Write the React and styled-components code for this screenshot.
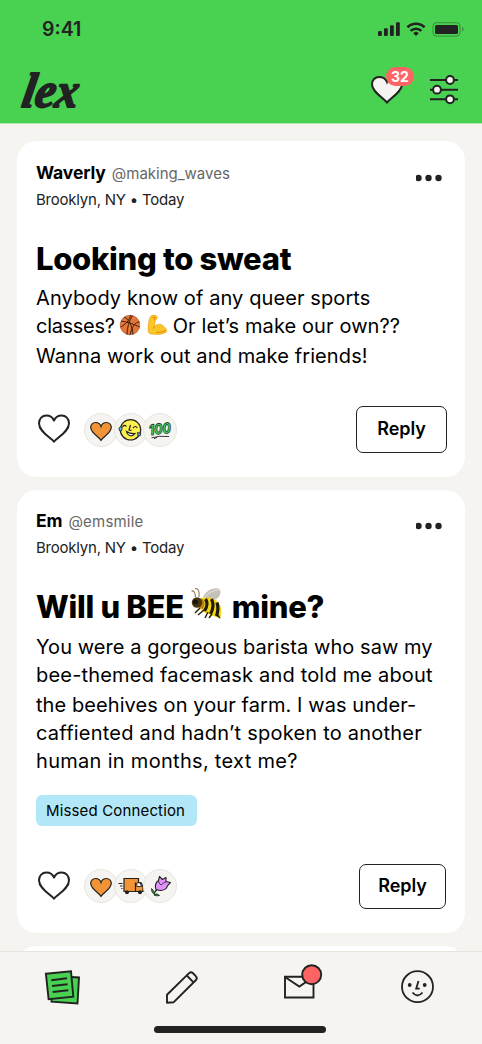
import styled, { createGlobalStyle } from "styled-components";

const GlobalStyle = createGlobalStyle`
  * {
    box-sizing: border-box;
  }
  body {
    margin: 0;
    background: #f5f4f0;
    font-family: Inter, "Liberation Sans", sans-serif;
    color: #000;
  }
  svg {
    display: block;
    flex-shrink: 0;
  }
`;

const Screen = styled.div`
  width: 482px;
  height: 1044px;
  display: flex;
  flex-direction: column;
  overflow: hidden;
  background: #f5f4f0;
`;

const Header = styled.header`
  height: 124px;
  flex-shrink: 0;
  background: #49d152;
  border-bottom: 1px solid #b4e6b1;
`;

const StatusBar = styled.div`
  display: flex;
  justify-content: space-between;
  height: 60px;
  padding: 18px 16px 0 42px;
`;

const Clock = styled.div`
  font-size: 19.5px;
  line-height: 23px;
  font-weight: 600;
  color: #222;
`;

const TopBar = styled.div`
  display: flex;
  justify-content: space-between;
  padding-left: 10px;
  padding-right: 22px;
`;

const TopActions = styled.div`
  display: flex;
  gap: 22px;
  padding-top: 4px;
`;

const Likes = styled.div`
  position: relative;
`;

const Count = styled.span`
  position: absolute;
  left: 16px;
  top: 3px;
  width: 28px;
  height: 19px;
  border-radius: 10px;
  background: #ff6464;
  color: #fff;
  font-size: 14px;
  font-weight: 700;
  line-height: 19px;
  text-align: center;
`;

const Feed = styled.main`
  flex: 1;
  min-height: 0;
  overflow: hidden;
  display: flex;
  flex-direction: column;
  gap: 13px;
  padding: 17px 16.6px 0 16.5px;
`;

const Card = styled.article`
  flex-shrink: 0;
  height: ${(p) => p.$height}px;
  padding: ${(p) => p.$top || 19}px 19.4px 0 19.5px;
  border-radius: 20px;
  background: #fff;
  display: flex;
  flex-direction: column;
`;

const CardTop = styled.div`
  display: flex;
  justify-content: space-between;
  height: 79px;
`;

const Author = styled.div`
  display: flex;
  align-items: baseline;
  gap: 6px;
  height: 27px;
  line-height: 26px;
`;

const Name = styled.span`
  font-size: 17.5px;
  font-weight: 700;
  letter-spacing: -0.1px;
`;

const Handle = styled.span`
  font-size: 15px;
  color: #666;
  letter-spacing: ${(p) => p.$track}px;
`;

const Place = styled.div`
  font-size: 15px;
  line-height: 25px;
  color: #222;
  letter-spacing: -0.22px;
`;

const Title = styled.h2`
  margin: 0;
  display: flex;
  height: ${(p) => p.$height}px;
  font-size: 31px;
  line-height: 39px;
  font-weight: 800;
  letter-spacing: -0.3px;
  white-space: pre;
`;

const Body = styled.div`
  font-size: 20px;
`;

const Line = styled.div`
  display: flex;
  height: 28px;
  line-height: 28px;
  white-space: pre;
  letter-spacing: ${(p) => p.$track || 0}px;

  &:nth-child(3) {
    margin-top: 1.5px;
  }
`;

const Tight = styled.span`
  letter-spacing: -0.3px;
`;

const Emoji = styled.span`
  margin-left: ${(p) => p.$left || 0}px;
  margin-right: ${(p) => p.$right || 0}px;
`;

const Tag = styled.div`
  align-self: flex-start;
  width: 161px;
  height: 31px;
  margin-top: 20.5px;
  padding-left: 10px;
  border-radius: 6px;
  background: #b1e7f6;
  font-size: 15px;
  line-height: 32px;
  white-space: nowrap;
  letter-spacing: 0.15px;
`;

const CardBottom = styled.div`
  display: flex;
  align-items: center;
  height: 48px;
  margin-top: auto;
  margin-bottom: ${(p) => p.$bottom}px;
  padding-left: 1px;
`;

const Reactions = styled.div`
  display: flex;
  margin-left: 13px;
  margin-top: ${(p) => p.$drop || 0}px;
`;

const Bubble = styled.div`
  width: 34px;
  height: 34px;
  margin-right: -4.3px;
  border: 1px solid #e7e5df;
  border-radius: 50%;
  background: #f5f4f0;
`;

const ReplyButton = styled.button`
  width: ${(p) => p.$width}px;
  height: ${(p) => p.$height}px;
  margin-left: auto;
  margin-right: ${(p) => p.$inset}px;
  padding: 0 0 2px;
  border: 1.5px solid #222;
  border-radius: 7px;
  background: #fff;
  font-family: inherit;
  font-size: 18px;
  font-weight: 600;
  color: #000;
  letter-spacing: -0.1px;
`;

const TabBar = styled.nav`
  height: 93px;
  flex-shrink: 0;
  border-top: 1px solid #e5e3de;
  background: #f5f4f0;
`;

const Tabs = styled.div`
  display: grid;
  grid-template-columns: 121px 119px 117.5px 36px;
  align-items: center;
  height: 74px;
  padding: 0 0 4px 42px;
`;

const HomeIndicator = styled.div`
  width: 172px;
  height: 7px;
  margin-left: 154px;
  border-radius: 4px;
  background: #222;
`;

const StatusIcons = () => (
  <svg width="90" height="20" viewBox="376 18 90 20">
    <g fill="#222">
      <rect x="378" y="31" width="3.8" height="5" rx="1" />
      <rect x="384" y="28.3" width="3.8" height="7.7" rx="1" />
      <rect x="390" y="25.3" width="3.8" height="10.7" rx="1" />
      <rect x="396" y="22.3" width="3.8" height="13.7" rx="1" />
      <path d="M413.2 33.2a4 4 0 0 1 5.6 0L416 36z" />
      <rect x="435" y="25" width="23" height="9" rx="1.6" />
      <path d="M462.3 27v4.6q1.2-.6 1.2-2.3t-1.2-2.3z" opacity=".5" />
    </g>
    <g fill="none" stroke="#222" strokeWidth="2.6">
      <path d="M407.4 27.2a12.3 12.3 0 0 1 17.2 0" />
      <path d="M410.6 30.9a7.8 7.8 0 0 1 10.8 0" />
    </g>
    <rect x="433" y="22.7" width="27" height="13.4" rx="3.4" fill="none" stroke="#222" strokeOpacity=".4" />
  </svg>
);

const Logo = () => (
  <svg width="84" height="62" viewBox="10 60 84 62">
    <text
      x="0"
      y="0"
      transform="translate(20.500 106.500) skewX(-10)"
      fill="#222"
      stroke="#222"
      strokeWidth="1.8"
      strokeLinejoin="round"
      fontFamily="'Liberation Serif', serif"
      fontSize="49"
      fontStyle="italic"
      fontWeight="700"
      textLength="56"
      lengthAdjust="spacingAndGlyphs"
    >
      lex
    </text>
  </svg>
);

const Heart = () => (
  <svg width="34" height="32" viewBox="-1 -1 34 32">
    <path
      d="M16 27.800C13 23.500 1 18 1 9.200C1 4.600 4.300 1.500 8.300 1.500C12 1.500 14.800 3.600 16 6.500C17.200 3.600 20 1.500 23.700 1.500C27.700 1.500 31 4.600 31 9.200C31 18 19 23.500 16 27.800Z"
      fill="none"
      stroke="#222"
      strokeWidth="2"
      strokeLinejoin="round"
    />
  </svg>
);

const Sliders = () => (
  <svg width="32" height="44" viewBox="428 64 32 44" fill="#f5f4f0" stroke="#222" strokeWidth="2">
    <path d="M430 80H458M430 89.700H458M430 99.300H458" />
    <circle cx="450" cy="80" r="3.900" />
    <circle cx="437" cy="89.700" r="3.900" />
    <circle cx="450" cy="99.300" r="3.900" />
  </svg>
);

const Dots = () => (
  <svg width="30" height="36" viewBox="0 0 30 36" fill="#222">
    <circle cx="2.500" cy="18" r="3.200" />
    <circle cx="12.500" cy="18" r="3.200" />
    <circle cx="22.500" cy="18" r="3.200" />
  </svg>
);

const Basketball = () => (
  <svg width="22" height="28" viewBox="0 0 22 28">
    <circle cx="11" cy="13" r="9.800" fill="#e4763a" stroke="#a84a1c" strokeWidth=".6" />
    <g fill="none" stroke="#43220f" strokeWidth="1">
      <path d="M2 9C8 10 15 12 20.500 15" />
      <path d="M13.500 3.500C10 9 8 16 8 22.500" />
      <path d="M5 5C10 7 13 13 14 22.500" />
      <path d="M1.500 15C6 13 11 8 11.500 3" />
      <path d="M20.500 10C16 10 13 15 11 22.800" />
    </g>
  </svg>
);

const Biceps = () => (
  <svg width="21" height="28" viewBox="0 0 21 28">
    <path
      d="M3.500 4.500C5 2.800 8.500 2.900 9.800 4.300C10.700 5.400 10 7.600 8.500 8C7.800 9.500 7.600 12 8 14.500C10 12 13.500 11.500 15.500 13.500C18.500 15.500 20 18 19.700 19.500C17 22.700 9 23 2.500 21.500C0 19 1.200 9.500 3.500 4.500Z"
      fill="#fcc626"
      stroke="#e69c10"
      strokeWidth=".7"
    />
    <path d="M5.500 5.500L8 5L7.500 8M6 16.500Q6.800 14.800 8 14.500M9 20.500Q15 20.500 18.500 18.500" fill="none" stroke="#dc8f0a" />
  </svg>
);

const Bee = () => (
  <svg width="34" height="38" viewBox="188 588 34 38">
    <path d="M202 598C205 592 212 588.500 217 589.500C221 591 220 597 215 600.500L204 601Z" fill="#c5c1b8" />
    <path d="M203 599C207 594 212 591 218 591" fill="none" stroke="#e9e6df" />
    <path d="M196 602C202 596 215 598 219 606C221 611 220 616 219.500 619.500C214 617 204 615 199 610Z" fill="#f5d60c" />
    <g fill="none" stroke="#201a10" strokeWidth="3.200">
      <path d="M204.500 600Q208 605 203.500 612" />
      <path d="M210.500 600Q214 607 209.500 615" />
      <path d="M216 603.500Q218 610 215.500 617" />
    </g>
    <path d="M200 599Q206 602 202 610L197 608Z" fill="#b4830e" />
    <circle cx="196" cy="603.500" r="5.200" fill="#4b350b" />
    <circle cx="194.500" cy="603" r="2.500" fill="#17151a" />
    <path d="M194.500 598Q194 591 190.500 592M198 598Q199 589 194 589.500" fill="none" stroke="#8c7858" strokeWidth="1.100" />
    <path d="M199 609L194 614M203 611L197 616M207 613L204 619M211 615L208 619" fill="none" stroke="#34230c" strokeWidth="1.500" />
    <path d="M218 616L219.500 620L215.500 617Z" fill="#201a10" />
  </svg>
);

const HeartReaction = () => (
  <svg width="32" height="32" viewBox="0 0 32 32">
    <path
      d="M16 26.300C13.500 22.500 5.700 19 5.700 13.300C5.700 10.500 8 8.500 10.500 8.500C13 8.500 15.200 10 16 12.500C16.800 10 19 8.500 21.500 8.500C24 8.500 26.300 10.500 26.300 13.300C26.300 19 18.500 22.500 16 26.300Z"
      fill="#f09437"
      stroke="#222"
      strokeWidth="1.200"
    />
  </svg>
);

const JoyReaction = () => (
  <svg width="32" height="32" viewBox="0 0 32 32" stroke="#222" strokeWidth="1.200">
    <circle cx="15.500" cy="15.800" r="10.200" fill="#fcf050" />
    <path d="M7.500 13Q9.500 10 11.500 12.500M18 14Q20.500 11 22.300 14M15.500 11L14 16L16.500 16.300" fill="none" />
    <path d="M11.500 17.500Q15 20 20 19.500Q17.500 22.800 14.500 21.500Q12 20.300 11.500 17.500Z" fill="#fff" />
    <path d="M7.300 13.500Q4.500 11.500 4 15Q4.500 18 6.500 16.800ZM22.500 18.500L23 22Q26 22.500 25.800 19.500Z" fill="#62bdf3" strokeWidth=".9" />
  </svg>
);

const HundredReaction = () => (
  <svg width="32" height="32" viewBox="0 0 32 32">
    <text
      x="5"
      y="20"
      transform="rotate(-6 16 16)"
      fill="#43cd55"
      stroke="#222"
      strokeWidth=".7"
      fontFamily="Inter, sans-serif"
      fontSize="14.500"
      fontStyle="italic"
      fontWeight="800"
      textLength="22"
      lengthAdjust="spacingAndGlyphs"
    >
      100
    </text>
    <path d="M7.500 23.800Q15 21.500 25 22.500M10 24.800L13 23.300" fill="none" stroke="#222" strokeWidth=".9" />
  </svg>
);

const TruckReaction = () => (
  <svg width="32" height="32" viewBox="0 0 32 32" stroke="#222" strokeWidth="1.200">
    <path d="M9 8.500H23.500V12.500H26L28 17V21.500H9Z" fill="#f09437" />
    <path d="M20.500 12.500V21.500M3.500 13.500H7.500M5 16H7.500M6.300 18.500H7.500" fill="none" />
    <path d="M21.800 12.800H25.200L26.500 16.500H21.800Z" fill="#f5f4f0" strokeWidth=".9" />
    <circle cx="12" cy="22.300" r="1.400" fill="#222" />
    <circle cx="25" cy="22.300" r="1.400" fill="#222" />
  </svg>
);

const TulipReaction = () => (
  <svg width="32" height="32" viewBox="0 0 32 32" stroke="#222" strokeWidth="1.100" strokeLinejoin="round">
    <path d="M13 19.500Q10 22 10.500 25.500" fill="none" />
    <path d="M11 24Q10 20 7.500 18.500Q7 22.500 10.500 24.500ZM10.500 25Q13 22.500 15.500 25.500Q12.500 26.500 10.500 25Z" fill="#3ba84f" strokeWidth=".8" />
    <path d="M12 19.500Q10 13.500 14.500 10.500L15.500 6.500L18.500 9.500L22 7.500L22 11.500L26.500 12.500Q23.500 15 22.500 18Q19.500 22 12 19.500Z" fill="#df93fa" />
    <path d="M14.500 10.500Q14.500 13.500 17 15Q19.500 12.500 22 12" fill="none" strokeWidth=".8" />
  </svg>
);

const FeedIcon = () => (
  <svg width="40" height="40" viewBox="42 967 40 40" fill="#49d152" stroke="#222" strokeWidth="1.900">
    <path d="M53 976L79 977.500L77.500 1003.500L51.500 1001.700Z" />
    <path d="M45.900 973.700L71 971.300L73.300 996.600L48.600 999.200Z" />
    <path d="M51.300 980.200L67 978.300M52 986L67.700 984.300M52.700 992L68.300 990.300" />
  </svg>
);

const PencilIcon = () => (
  <svg width="36" height="36" viewBox="163 969 36 36" fill="none" stroke="#222" strokeWidth="1.900" strokeLinejoin="round">
    <path d="M167 1002.700V994.800L189.300 972.900Q191 971.500 192.800 973L196 976.300Q197.500 978.200 196 980L173.500 1002.300Z" />
    <path d="M186.800 975.500L193.500 982.300" />
  </svg>
);

const MailIcon = () => (
  <svg width="42" height="50" viewBox="282 962 42 50" fill="none" stroke="#222" strokeWidth="1.900">
    <path d="M285 976.800H313.500V997.500H285Z" />
    <path d="M285 977L299.300 986.500L313.500 977" />
    <circle cx="311.700" cy="974.700" r="9.500" fill="#ff6464" />
  </svg>
);

const FaceIcon = () => (
  <svg width="36" height="36" viewBox="400 969 36 36" fill="none" stroke="#222" strokeWidth="1.800">
    <circle cx="417.500" cy="986.700" r="15.500" />
    <path d="M418.500 981L416.200 988.700H419.700M412.500 992.500Q417.500 998.500 422.500 992.500" />
    <circle cx="409.700" cy="985" r="1.900" fill="#222" stroke="none" />
    <circle cx="424.700" cy="985" r="1.900" fill="#222" stroke="none" />
  </svg>
);

const PostHead = ({ name, handle, track }) => (
  <CardTop>
    <div>
      <Author>
        <Name>{name}</Name>
        <Handle $track={track}>{handle}</Handle>
      </Author>
      <Place>Brooklyn, NY • Today</Place>
    </div>
    <Dots />
  </CardTop>
);

const App = () => {
  return (
    <Screen>
      <GlobalStyle />
      <Header>
        <StatusBar>
          <Clock>9:41</Clock>
          <StatusIcons />
        </StatusBar>
        <TopBar>
          <Logo />
          <TopActions>
            <Likes>
              <svg width="36" height="40" viewBox="370 64 36 40">
                <path
                  d="M387 102.500C382 97 372 91.500 372 84.300C372 80 375.200 77 379 77C382.800 77 385.800 79 387 82C388.200 79 391.200 77 395 77C398.800 77 402 80 402 84.300C402 91.500 392 97 387 102.500Z"
                  fill="#f5f4f0"
                  stroke="#222"
                  strokeWidth="2"
                />
              </svg>
              <Count>32</Count>
            </Likes>
            <Sliders />
          </TopActions>
        </TopBar>
      </Header>

      <Feed>
        <Card $height={336}>
          <PostHead name="Waverly" handle="@making_waves" track={0} />
          <Title $height={45}>Looking to sweat</Title>
          <Body>
            <Line $track={0.1}>Anybody know of any queer sports</Line>
            <Line $track={0.1}>
              <Tight>classes? </Tight>
              <Emoji $left={-0.5}><Basketball /></Emoji>
              <Emoji $left={5.5} $right={-1}><Biceps /></Emoji> Or let’s make our own??
            </Line>
            <Line $track={0.1}>Wanna work out and make friends!</Line>
          </Body>
          <CardBottom $bottom={24}>
            <Heart />
            <Reactions $drop={2}>
              <Bubble><HeartReaction /></Bubble>
              <Bubble><JoyReaction /></Bubble>
              <Bubble><HundredReaction /></Bubble>
            </Reactions>
            <ReplyButton $width={91} $height={47} $inset={-1}>Reply</ReplyButton>
          </CardBottom>
        </Card>

        <Card $height={443} $top={18}>
          <PostHead name="Em" handle="@emsmile" track={0.2} />
          <Title $height={46}>
            Will u BEE
            <Emoji $left={5} $right={9}><Bee /></Emoji>
            mine?
          </Title>
          <Body>
            <Line $track={0.06}>You were a gorgeous barista who saw my</Line>
            <Line $track={0.19}>bee-themed facemask and told me about</Line>
            <Line $track={0.08}>the beehives on your farm. I was under-</Line>
            <Line $track={0.22}>caffiented and hadn’t spoken to another</Line>
            <Line $track={0.3}>human in months, text me?</Line>
          </Body>
          <Tag>Missed Connection</Tag>
          <CardBottom $bottom={23}>
            <Heart />
            <Reactions>
              <Bubble><HeartReaction /></Bubble>
              <Bubble><TruckReaction /></Bubble>
              <Bubble><TulipReaction /></Bubble>
            </Reactions>
            <ReplyButton $width={87} $height={45} $inset={0}>Reply</ReplyButton>
          </CardBottom>
        </Card>

        <Card $height={300} />
      </Feed>

      <TabBar>
        <Tabs>
          <FeedIcon />
          <PencilIcon />
          <MailIcon />
          <FaceIcon />
        </Tabs>
        <HomeIndicator />
      </TabBar>
    </Screen>
  );
};

export default App;
